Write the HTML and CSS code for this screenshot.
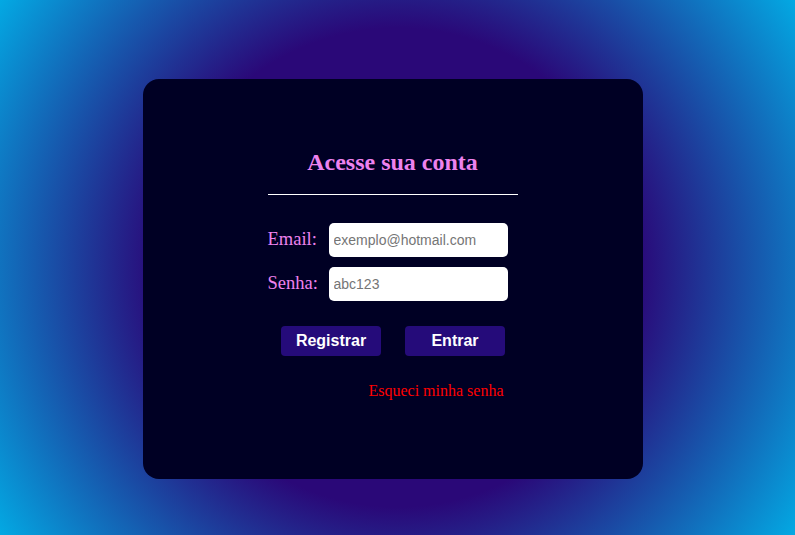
FILE: index.html
```html
<!DOCTYPE html>
<html lang="pt-BR">
<head>
<meta charset="utf-8">
<title>Login</title>
<link rel="stylesheet" href="styles.css">
</head>
<body>
<main class="card">
  <div class="inner">
    <h2 class="title">Acesse sua conta</h2>
    <div class="rule"></div>
    <form class="form">
      <div class="row">
        <label class="label" for="email">Email:</label>
        <input class="input" id="email" type="text" placeholder="exemplo@hotmail.com">
      </div>
      <div class="row">
        <label class="label" for="senha">Senha:</label>
        <input class="input" id="senha" type="password" placeholder="abc123">
      </div>
      <div class="buttons">
        <button class="btn" type="button">Registrar</button>
        <button class="btn" type="button">Entrar</button>
      </div>
      <div class="forgot-row">
        <a class="forgot" href="#">Esqueci minha senha</a>
      </div>
    </form>
  </div>
</main>
</body>
</html>
```

FILE: styles.css
```css
html, body {
  margin: 0;
  height: 100%;
}
body {
  background: radial-gradient(circle farthest-corner at 50% 50%, #2a0878 50%, #03a9e3 100%);
  display: flex;
  justify-content: center;
  align-items: center;
  padding: 22px 10px 0 0;
  box-sizing: border-box;
  font-family: "Liberation Serif", "Times New Roman", serif;
}
.card {
  width: 500px;
  height: 400px;
  box-sizing: border-box;
  background: #000024;
  border-radius: 16px;
  padding-top: 70px;
  display: flex;
  justify-content: center;
}
.inner {
  width: 250px;
  display: flex;
  flex-direction: column;
}
.title {
  margin: 0 0 18px;
  font-size: 24px;
  line-height: 27px;
  font-weight: bold;
  color: #ee82ee;
  text-align: center;
}
.rule {
  height: 1px;
  background: #ffffff;
  margin-bottom: 28px;
}
.form {
  display: flex;
  flex-direction: column;
  gap: 10px;
}
.row {
  display: flex;
  align-items: center;
  gap: 10px;
}
.label {
  width: 51px;
  font-size: 18.5px;
  color: #ee82ee;
}
.input {
  width: 179px;
  height: 34px;
  box-sizing: border-box;
  border: none;
  border-radius: 5px;
  padding: 0 5px;
  background: #ffffff;
  font-family: "Liberation Sans", Arial, sans-serif;
  font-size: 14px;
  color: #333;
  outline: none;
}
.input::placeholder {
  color: #757575;
}
.buttons {
  display: flex;
  justify-content: center;
  gap: 24px;
  margin-top: 15px;
  padding-left: 1px;
}
.btn {
  width: 100px;
  height: 30px;
  border: none;
  border-radius: 4px;
  background: #250b7a;
  color: #ffffff;
  font-family: "Liberation Sans", Arial, sans-serif;
  font-size: 16px;
  font-weight: bold;
  padding: 0;
}
.forgot-row {
  display: flex;
  justify-content: flex-end;
  padding-right: 14px;
  margin-top: 16px;
}
.forgot {
  color: #ff0000;
  font-size: 16px;
  text-decoration: none;
}
```
